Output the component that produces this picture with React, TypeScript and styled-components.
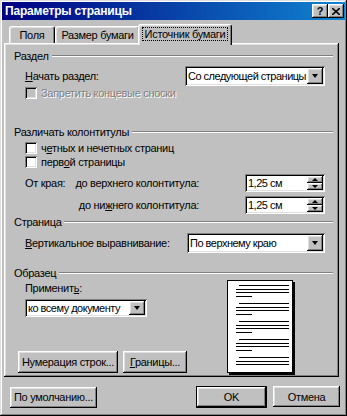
import React from 'react'
import styled, { createGlobalStyle, css } from 'styled-components'

const GlobalStyle = createGlobalStyle`
  html, body {
    margin: 0;
    padding: 0;
    background: #c0c0c0;
  }
  body {
    font-family: 'Liberation Sans', Arial, sans-serif;
    font-size: 11px;
    letter-spacing: -0.3px;
    color: #000;
  }
`

const raised = css`
  box-shadow: inset -1px -1px #000, inset 1px 1px #fff, inset -2px -2px #808080, inset 2px 2px #dfdfdf;
`

const sunken = css`
  box-shadow: inset 1px 1px #808080, inset -1px -1px #fff, inset 2px 2px #000, inset -2px -2px #dfdfdf;
`

const Window = styled.div`
  width: 347px;
  height: 416px;
  box-sizing: border-box;
  padding: 2px;
  background: #c0c0c0;
  box-shadow: inset -1px -1px #000, inset 1px 1px #dfdfdf, inset -2px -2px #808080, inset 2px 2px #fff;
  display: flex;
  flex-direction: column;
`

const TitleBar = styled.div`
  height: 18px;
  display: flex;
  align-items: center;
  padding: 0 1px 0 3px;
  background: linear-gradient(to right, #000080, #1084d0);
  color: #fff;
  font-weight: bold;
  font-size: 12px;
  letter-spacing: -0.2px;
`

const TitleText = styled.span`
  flex: 1;
`

const TitleButton = styled.div`
  width: 16px;
  height: 14px;
  box-sizing: border-box;
  background: #c0c0c0;
  ${raised};
  color: #000;
  display: flex;
  align-items: center;
  justify-content: center;
  font-size: 11px;
  font-weight: bold;
`

const TabRow = styled.div`
  display: flex;
  align-items: flex-end;
  height: 19px;
  margin-top: 4px;
  padding-left: 7px;
  position: relative;
  z-index: 1;
`

const Tab = styled.div<{ $active?: boolean; $w: number }>`
  width: ${p => p.$w}px;
  height: ${p => (p.$active ? 21 : 17)}px;
  margin: 0 ${p => (p.$active ? -2 : 0)}px ${p => (p.$active ? -2 : 0)}px;
  box-sizing: border-box;
  background: #c0c0c0;
  border: 1px solid;
  border-color: #fff #000 transparent #fff;
  border-bottom: none;
  border-radius: 3px 3px 0 0;
  box-shadow: inset -1px 0 #808080, inset 1px 1px #dfdfdf;
  display: flex;
  align-items: center;
  justify-content: center;
  padding-bottom: ${p => (p.$active ? 2 : 0)}px;
  position: relative;
  z-index: ${p => (p.$active ? 2 : 1)};
`

const FocusLabel = styled.span`
  outline: 1px dotted #000;
  padding: 0 2px;
`

const Panel = styled.div`
  height: 334px;
  margin: 0 6px 0 2px;
  box-sizing: border-box;
  padding: 2px 6px 0 10px;
  background: #c0c0c0;
  ${raised};
  display: flex;
  flex-direction: column;
`

const GroupHeader = styled.div<{ $top: number }>`
  display: flex;
  align-items: center;
  gap: 3px;
  height: 14px;
  margin-top: ${p => p.$top}px;

  &::after {
    content: '';
    flex: 1;
    border-top: 1px solid #808080;
    border-bottom: 1px solid #fff;
  }
`

const FieldRow = styled.div<{ $top: number; $h: number }>`
  display: flex;
  align-items: center;
  height: ${p => p.$h}px;
  margin-top: ${p => p.$top}px;
  padding: 0 8px 0 11px;
  white-space: nowrap;
`

const Label = styled.span<{ $w?: number; $right?: boolean; $disabled?: boolean }>`
  ${p => (p.$w ? `width: ${p.$w}px;` : '')}
  text-align: ${p => (p.$right ? 'right' : 'left')};
  color: ${p => (p.$disabled ? '#808080' : '#000')};
  text-shadow: ${p => (p.$disabled ? '1px 1px #fff' : 'none')};
`

const U = styled.span`
  text-decoration: underline;
`

const Combo = styled.div<{ $w: number; $h: number }>`
  width: ${p => p.$w}px;
  height: ${p => p.$h}px;
  margin-left: auto;
  box-sizing: border-box;
  background: #fff;
  ${sunken};
  display: flex;
  align-items: center;
  padding: 2px;
  flex-shrink: 0;
`

const ComboText = styled.span`
  flex: 1;
  min-width: 0;
  padding-left: 1px;
  letter-spacing: -0.5px;
  overflow: hidden;
  white-space: nowrap;
`

const DropButton = styled.div`
  width: 16px;
  flex-shrink: 0;
  align-self: stretch;
  box-sizing: border-box;
  background: #c0c0c0;
  ${raised};
  display: flex;
  align-items: center;
  justify-content: center;

  &::after {
    content: '';
    border-left: 3.5px solid transparent;
    border-right: 3.5px solid transparent;
    border-top: 4px solid #000;
  }
`

const Check = styled.span<{ $disabled?: boolean }>`
  width: 12px;
  height: 12px;
  box-sizing: border-box;
  background: ${p => (p.$disabled ? '#c0c0c0' : '#fff')};
  ${sunken};
  margin-right: 4px;
  flex-shrink: 0;
`

const Spinner = styled.div`
  width: 80px;
  height: 18px;
  margin-left: auto;
  box-sizing: border-box;
  background: #fff;
  ${sunken};
  display: flex;
  align-items: center;
  padding: 2px;
  flex-shrink: 0;
`

const SpinButtons = styled.div`
  width: 16px;
  align-self: stretch;
  display: flex;
  flex-direction: column;
`

const SpinButton = styled.div<{ $up?: boolean }>`
  flex: 1;
  background: #c0c0c0;
  ${raised};
  display: flex;
  align-items: center;
  justify-content: center;

  &::after {
    content: '';
    border-left: 3px solid transparent;
    border-right: 3px solid transparent;
    ${p => (p.$up ? 'border-bottom: 3px solid #000;' : 'border-top: 3px solid #000;')}
  }
`

const SampleSection = styled.div`
  display: flex;
  height: 93px;
  padding-left: 4px;
`

const SampleLeft = styled.div`
  display: flex;
  flex-direction: column;
  width: 170px;
`

const ApplyLabel = styled.div`
  margin: 2px 0 0 7px;
  line-height: 13px;
`

const ApplyCombo = styled(Combo)`
  margin: 4px 0 0 7px;
`

const SampleButtons = styled.div`
  display: flex;
  gap: 5px;
  margin-top: auto;
`

const Button = styled.div<{ $w: number; $h: number }>`
  width: ${p => p.$w}px;
  height: ${p => p.$h}px;
  box-sizing: border-box;
  background: #c0c0c0;
  ${raised};
  display: flex;
  align-items: center;
  justify-content: center;
  white-space: nowrap;
`

const DefaultButton = styled(Button)`
  border: 1px solid #000;
`

const Preview = styled.svg`
  margin-left: auto;
  margin-right: 38px;
  flex-shrink: 0;
`

const Footer = styled.div`
  display: flex;
  align-items: center;
  margin-top: 9px;
  padding: 0 5px 0 8px;
`

const FooterRight = styled.div`
  display: flex;
  gap: 6px;
  margin-left: auto;
`

const paragraphs = [5, 23, 41, 59, 77]
const lineOffsets = [0, 4, 7, 11]

const PagePreview = () => (
  <Preview width={68} height={95} viewBox="0 0 68 95">
    <rect x={2} y={2} width={66} height={93} fill="#000" />
    <rect x={0.5} y={0.5} width={65} height={92} fill="#fff" stroke="#000" />
    {paragraphs.map((top, p) =>
      lineOffsets.map((off, i) => {
        const y = top + off + 0.5
        if (y > 88) return null
        const x1 = i === 0 ? 12 : 9
        const x2 = i === 3 ? 25 : 62
        return <line key={`${p}-${i}`} x1={x1} x2={x2} y1={y} y2={y} stroke="#000" strokeWidth={1} />
      })
    )}
  </Preview>
)

const App = () => {
  return (
    <>
      <GlobalStyle />
      <Window>
        <TitleBar>
          <TitleText>Параметры страницы</TitleText>
          <TitleButton>?</TitleButton>
          <TitleButton>
            <svg width="8" height="7" viewBox="0 0 8 7">
              <path d="M0 0 L8 7 M8 0 L0 7" stroke="#000" strokeWidth="1.6" />
            </svg>
          </TitleButton>
        </TitleBar>

        <TabRow>
          <Tab $w={46}>Поля</Tab>
          <Tab $w={85}>Размер бумаги</Tab>
          <Tab $w={94} $active>
            <FocusLabel>Источник бумаги</FocusLabel>
          </Tab>
        </TabRow>

        <Panel>
          <GroupHeader $top={4}>Раздел</GroupHeader>
          <FieldRow $top={3} $h={20}>
            <Label>
              <U>Н</U>ачать раздел:
            </Label>
            <Combo $w={140} $h={20}>
              <ComboText>Со следующей страницы</ComboText>
              <DropButton />
            </Combo>
          </FieldRow>
          <FieldRow $top={0} $h={14}>
            <Check $disabled />
            <Label $disabled>Запретить концевые сноски</Label>
          </FieldRow>

          <GroupHeader $top={25}>Различать колонтитулы</GroupHeader>
          <FieldRow $top={2} $h={14}>
            <Check />
            <Label>
              ч<U>е</U>тных и нечетных страниц
            </Label>
          </FieldRow>
          <FieldRow $top={0} $h={14}>
            <Check />
            <Label>
              перв<U>о</U>й страницы
            </Label>
          </FieldRow>
          <FieldRow $top={5} $h={18}>
            <Label $w={50}>От края:</Label>
            <Label $w={124} $right>
              до верхнего колонтитула:
            </Label>
            <Spinner>
              <ComboText>1,25 см</ComboText>
              <SpinButtons>
                <SpinButton $up />
                <SpinButton />
              </SpinButtons>
            </Spinner>
          </FieldRow>
          <FieldRow $top={4} $h={18}>
            <Label $w={50} />
            <Label $w={124} $right>
              до ни<U>ж</U>него колонтитула:
            </Label>
            <Spinner>
              <ComboText>1,25 см</ComboText>
              <SpinButtons>
                <SpinButton $up />
                <SpinButton />
              </SpinButtons>
            </Spinner>
          </FieldRow>

          <GroupHeader $top={1}>Страница</GroupHeader>
          <FieldRow $top={4} $h={20}>
            <Label>
              <U>В</U>ертикальное выравнивание:
            </Label>
            <Combo $w={138} $h={20}>
              <ComboText>По верхнему краю</ComboText>
              <DropButton />
            </Combo>
          </FieldRow>

          <GroupHeader $top={13}>Образец</GroupHeader>
          <SampleSection>
            <SampleLeft>
              <ApplyLabel>
                Применит<U>ь</U>:
              </ApplyLabel>
              <ApplyCombo $w={122} $h={18}>
                <ComboText>ко всему документу</ComboText>
                <DropButton />
              </ApplyCombo>
              <SampleButtons>
                <Button $w={100} $h={22}>
                  Нумерация строк...
                </Button>
                <Button $w={64} $h={22}>
                  <span>
                    <U>Г</U>раницы...
                  </span>
                </Button>
              </SampleButtons>
            </SampleLeft>
            <PagePreview />
          </SampleSection>
        </Panel>

        <Footer>
          <Button $w={87} $h={21}>
            По умолчанию...
          </Button>
          <FooterRight>
            <DefaultButton $w={71} $h={22}>
              OK
            </DefaultButton>
            <Button $w={67} $h={21}>
              Отмена
            </Button>
          </FooterRight>
        </Footer>
      </Window>
    </>
  )
}

export default App
